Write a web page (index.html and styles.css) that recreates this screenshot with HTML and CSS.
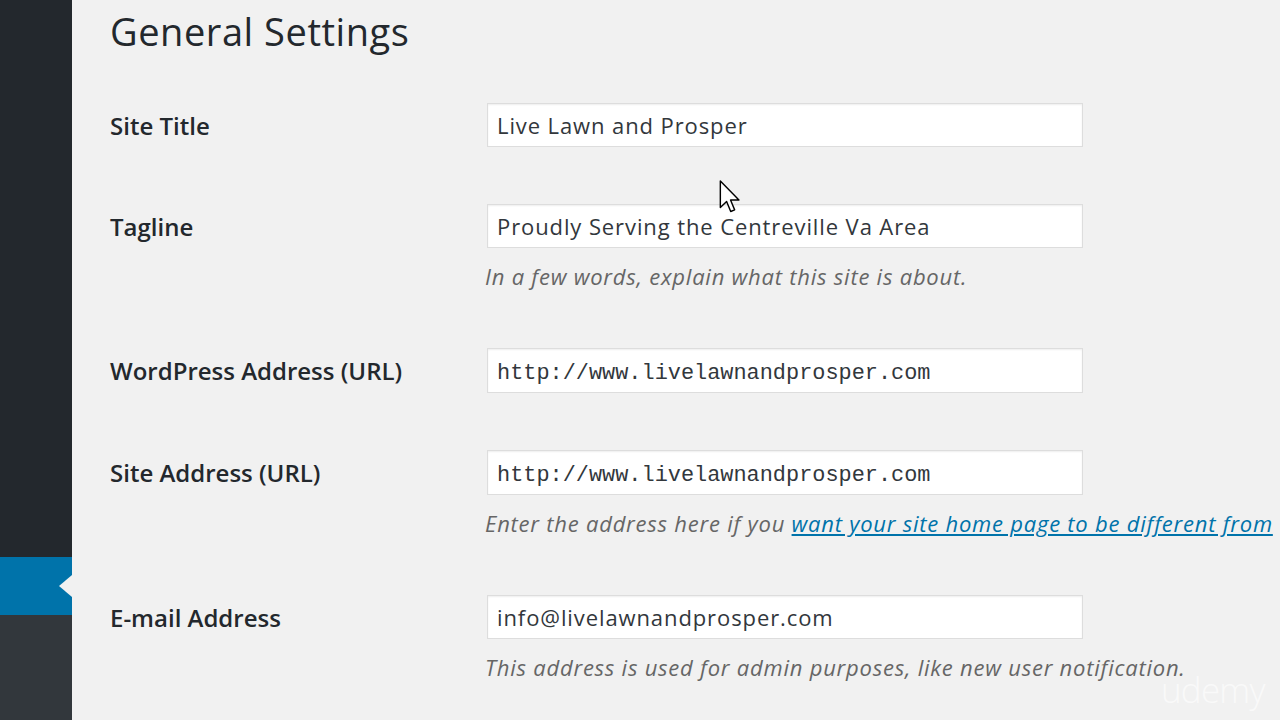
FILE: index.html
```html
<!DOCTYPE html>
<html lang="en">
<head>
<meta charset="utf-8">
<title>General Settings</title>
<link rel="stylesheet" href="styles.css">
</head>
<body>
<div class="layout">
  <nav class="sidebar">
    <div class="menu-top"></div>
    <div class="menu-current"></div>
    <div class="menu-rest"></div>
  </nav>
  <main class="main">
    <h1 class="page-title">General Settings</h1>
    <div class="form">
      <div class="row">
        <label class="label">Site Title</label>
        <div class="field">
          <input class="text-input" type="text" value="Live Lawn and Prosper">
        </div>
      </div>
      <div class="row">
        <label class="label">Tagline</label>
        <div class="field">
          <input class="text-input" type="text" value="Proudly Serving the Centreville Va Area">
          <p class="description">In a few words, explain what this site is about.</p>
        </div>
      </div>
      <div class="row">
        <label class="label">WordPress Address (URL)</label>
        <div class="field">
          <input class="text-input code" type="text" value="http://www.livelawnandprosper.com">
        </div>
      </div>
      <div class="row">
        <label class="label">Site Address (URL)</label>
        <div class="field">
          <input class="text-input code" type="text" value="http://www.livelawnandprosper.com">
          <p class="description">Enter the address here if you <a href="#">want your site home page to be different from</a></p>
        </div>
      </div>
      <div class="row">
        <label class="label">E-mail Address</label>
        <div class="field">
          <input class="text-input" type="text" value="info@livelawnandprosper.com">
          <p class="description">This address is used for admin purposes, like new user notification.</p>
        </div>
      </div>
    </div>
  </main>
</div>
<svg class="cursor" width="24" height="34" viewBox="0 0 12 19" xmlns="http://www.w3.org/2000/svg">
  <path d="M0.6 0.6 L0.6 15.4 L4.1 12 L6.4 17.6 L8.6 16.7 L6.3 11.2 L11 11.2 Z" fill="#fff" stroke="#000" stroke-width="0.8" stroke-linejoin="round"/>
</svg>
<div class="watermark">udemy</div>
</body>
</html>
```
FILE: styles.css
```css
html, body {
  margin: 0;
  padding: 0;
}
body {
  background: #f1f1f1;
  font-family: "Open Sans", "Noto Sans", sans-serif;
  color: #23282d;
  width: 1280px;
  height: 720px;
  overflow: hidden;
  position: relative;
}
.layout {
  display: flex;
  height: 720px;
  overflow: hidden;
}
.sidebar {
  width: 72px;
  flex: 0 0 72px;
  display: flex;
  flex-direction: column;
}
.menu-top {
  flex: 0 0 557px;
  background: #23282d;
}
.menu-current {
  flex: 0 0 58px;
  background: #0073aa;
  position: relative;
}
.menu-current::after {
  content: "";
  position: absolute;
  right: 0;
  top: 18px;
  width: 0;
  height: 0;
  border-top: 11px solid transparent;
  border-bottom: 11px solid transparent;
  border-right: 13px solid #f1f1f1;
}
.menu-rest {
  flex: 1;
  background: #32373c;
}
.main {
  flex: 1;
  padding-left: 38px;
  overflow: hidden;
  min-width: 0;
}
.page-title {
  margin: 0;
  padding-top: 8px;
  font-size: 38px;
  line-height: 46px;
  font-weight: 400;
  letter-spacing: 0.55px;
  color: #23282d;
}
.form {
  margin-top: 49px;
  display: flex;
  flex-direction: column;
  gap: 57px;
}
.row {
  display: grid;
  grid-template-columns: 377px 1fr;
  align-items: start;
}
.label {
  height: 44px;
  display: flex;
  align-items: center;
  font-size: 24px;
  font-weight: 600;
  color: #23282d;
}
.field {
  min-width: 0;
}
.text-input {
  display: block;
  box-sizing: border-box;
  width: 596px;
  height: 44px;
  margin: 0;
  padding: 0 9px;
  border: 1px solid #dddddd;
  background: #fff;
  box-shadow: inset 0 1px 2px rgba(0, 0, 0, 0.07);
  font-family: "Open Sans", "Noto Sans", sans-serif;
  font-size: 22px;
  letter-spacing: 0.9px;
  color: #32373c;
  outline: none;
}
.text-input.code {
  height: 45px;
  padding-top: 6px;
  font-family: "Liberation Mono", "DejaVu Sans Mono", monospace;
  font-size: 21.9px;
  letter-spacing: 0;
}
.description {
  margin: 13px 0 0 -2px;
  font-size: 22px;
  line-height: 30px;
  font-style: italic;
  letter-spacing: 0.77px;
  color: #666;
  white-space: nowrap;
}
.description a {
  color: #0073aa;
  text-decoration: underline;
}
.cursor {
  position: absolute;
  left: 718px;
  top: 180px;
}
.watermark {
  position: absolute;
  left: 1161px;
  top: 666px;
  font-family: "Open Sans", "Noto Sans", sans-serif;
  font-weight: 300;
  font-size: 35px;
  color: rgba(255, 255, 255, 0.6);
  letter-spacing: -0.8px;
}
```
